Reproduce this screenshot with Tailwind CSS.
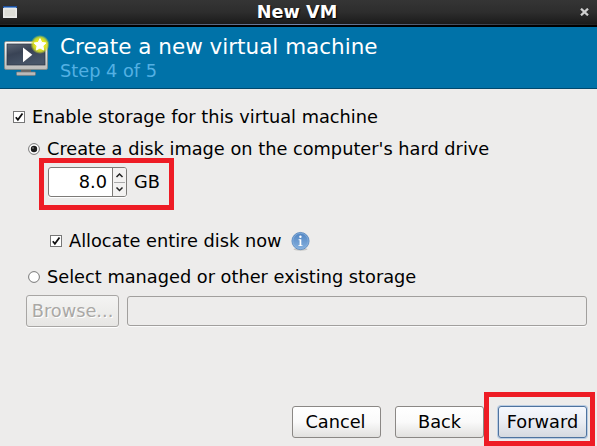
<!DOCTYPE html>
<html lang="en">
<head>
<meta charset="utf-8">
<title>New VM</title>
<script src="https://cdn.jsdelivr.net/npm/@tailwindcss/browser@4"></script>
</head>
<body class="w-[597px] h-[446px] overflow-hidden bg-[#edeceb] font-['DejaVu_Sans',sans-serif] text-[17.75px] leading-5 text-black whitespace-nowrap">
<div class="relative flex h-[446px] w-[597px] flex-col">
  <div class="flex h-[27px] shrink-0 items-start justify-between border-b-2 border-black bg-linear-to-b from-[#353535] via-[#2d2d2d] to-[#191919] pl-[3px] pr-2">
    <svg class="mt-[6px] h-3 w-[14px]" viewBox="0 0 14 12"><path fill="#e4e4e4" d="M0 0h14v12H0z"/><path fill="#1e4f9d" d="M0 0h14v2H0z"/><path fill="#6b9bd8" d="M1 1h12v1H1z"/><path fill="#dcdcd6" stroke="#fff" stroke-width=".5" d="M1 3h12v8H1z"/></svg>
    <div class="mt-[2px] pr-[3px] text-[17.7px] font-bold text-white [text-shadow:1px_1px_1px_#000]">New VM</div>
    <svg class="mt-2 h-2 w-[9px]" viewBox="0 0 9 8"><path d="M1 .7 8 7.3M8 .7 1 7.3" stroke="#d0d0d0" stroke-width="2.3"/></svg>
  </div>
  <div class="absolute left-0 top-6 h-px w-full bg-linear-to-r from-[#222] via-[#7186ae] to-[#222]"></div>
  <header class="flex h-[62px] shrink-0 border-b border-[#00496e] bg-[#0072a8] pl-1">
    <svg class="mt-[7px] h-[44px] w-[46px] shrink-0" viewBox="4 34 46 44">
      <defs>
        <linearGradient id="scr" x2=".5" y2="1"><stop stop-color="#5d6674"/><stop offset=".45" stop-color="#394355"/><stop offset="1" stop-color="#485669"/></linearGradient>
        <linearGradient id="bez" x2="0" y2="1"><stop stop-color="#fafafa"/><stop offset="1" stop-color="#bcbcba"/></linearGradient>
        <radialGradient id="glow"><stop offset=".5" stop-color="#e9ea1c"/><stop offset=".75" stop-color="#d5df27" stop-opacity=".85"/><stop offset="1" stop-color="#c8d830" stop-opacity="0"/></radialGradient>
      </defs>
      <path fill="#666" d="M21 69h10v4H21z"/>
      <rect x="16.5" y="72" width="19" height="3.4" rx=".8" fill="#bbb" stroke="#777" stroke-width=".7"/>
      <rect x="4.5" y="41.5" width="43" height="28" rx="1.5" fill="url(#bez)" stroke="#888a85" stroke-width=".8"/>
      <rect x="7" y="44" width="38" height="21" fill="url(#scr)" stroke="#2c3442" stroke-width=".7"/>
      <path fill="#fff" d="m23 47.5 9.3 7.3-9.3 7.4z"/>
      <circle cx="40" cy="44.5" r="9.6" fill="url(#glow)"/>
      <path fill="#fff" stroke="#fff" stroke-linejoin="round" d="m40 38.6 1.8 3.8 4.1.6-3 2.9.8 4.1-3.7-2-3.7 2 .8-4.1-3-2.9 4.1-.6z"/>
    </svg>
    <div class="ml-[10px] flex flex-col">
      <h1 class="mt-[8px] h-6 text-[21.5px] leading-6 text-white">Create a new virtual machine</h1>
      <p class="mt-[2px] text-[17.75px] leading-5 text-[#53b0e3]">Step 4 of 5</p>
    </div>
  </header>
  <main class="flex flex-col">
    <label class="ml-[13px] mt-[18px] flex h-5 items-center gap-[7px]">
      <svg class="h-3 w-3" viewBox="0 0 12 12"><rect x=".5" y=".5" width="11" height="11" fill="#fff" stroke="#777"/><path d="m2.8 6.2 2.1 2.6L9.5 2.5" fill="none" stroke="#111" stroke-width="1.8"/></svg>
      <span>Enable storage for this virtual machine</span>
    </label>
    <label class="ml-[28px] mt-3 flex h-5 items-center gap-[7px]">
      <svg class="h-3 w-3" viewBox="0 0 12 12"><circle cx="6" cy="6" r="5.4" fill="#fff" stroke="#777"/><circle cx="6" cy="6" r="3.2" fill="#1c1c1c"/><circle cx="5" cy="5" r=".9" fill="#777"/></svg>
      <span>Create a disk image on the computer's hard drive</span>
    </label>
    <div class="-mt-px ml-[39px] flex h-[52px] w-[135px] items-center border-5 border-[#ee1c25] pl-1">
      <div class="mt-[-4px] flex h-[30px] w-[79px] overflow-hidden rounded-[3px] border border-[#7d7b78] bg-white shadow-[0_1px_0_#fff]">
        <div class="w-[64px] border-r border-[#7d7b78] pr-[5px] pt-1 text-right">8.0</div>
        <svg class="h-7 w-[13px]" viewBox="0 0 13 28"><path fill="#f3f2f1" d="M0 0h13v28H0z"/><path d="M1 14.5h11" stroke="#aaa"/><path d="m3.5 9 3-3 3 3M3.5 19.5l3 3 3-3" fill="none" stroke="#222" stroke-width="1.5"/></svg>
      </div>
      <span class="ml-[7px] mt-[-4px]">GB</span>
    </div>
    <label class="ml-[50px] mt-[21px] flex h-5 items-center gap-[7px]">
      <svg class="h-3 w-3" viewBox="0 0 12 12"><rect x=".5" y=".5" width="11" height="11" fill="#fff" stroke="#777"/><path d="m2.8 6.2 2.1 2.6L9.5 2.5" fill="none" stroke="#111" stroke-width="1.8"/></svg>
      <span>Allocate entire disk now</span>
      <svg class="ml-[2px] h-5 w-[19px]" viewBox="0 0 19 20"><defs><linearGradient id="info" x2="0" y2="1"><stop stop-color="#4f83c1"/><stop offset="1" stop-color="#86b1df"/></linearGradient></defs><ellipse cx="9.5" cy="18.2" rx="7" ry="1.5" fill="#c5c5c4"/><circle cx="9.5" cy="10" r="8.6" fill="url(#info)" stroke="#487bb8" stroke-width=".7"/><circle cx="9.5" cy="10" r="7.7" fill="none" stroke="#8db5df" stroke-width=".7"/><circle cx="9.4" cy="5.8" r="1.2" fill="#fff"/><path fill="#fff" d="M7.6 8.3h2.7v5.9h1.2v.9H7.4v-.9h1.2V9.2h-1z"/></svg>
    </label>
    <label class="ml-[28px] mt-4 flex h-5 items-center gap-[7px]">
      <svg class="h-3 w-3" viewBox="0 0 12 12"><circle cx="6" cy="6" r="5.4" fill="#fff" stroke="#777"/></svg>
      <span>Select managed or other existing storage</span>
    </label>
    <div class="ml-[26px] mt-2 flex items-center gap-2">
      <button class="h-8 w-[93px] rounded-[3px] border border-[#a8a6a4] bg-linear-to-b from-[#f4f4f3] to-[#e7e6e4] text-[#aaa8a5] shadow-[0_1px_0_#fff] [text-shadow:1px_1px_0_#fff]">Browse...</button>
      <div class="h-[30px] w-[460px] rounded-[3px] border border-[#a19f9d] shadow-[0_1px_0_#fafafa]"></div>
    </div>
  </main>
  <footer class="mt-[79px] flex gap-[14px] pl-[292px]">
    <button class="h-8 w-[89px] shrink-0 rounded-[3px] border border-[#8b8885] bg-linear-to-b from-white via-[#fafafa] to-[#e2e1df] pr-0.5">Cancel</button>
    <button class="h-8 w-[89px] shrink-0 rounded-[3px] border border-[#8b8885] bg-linear-to-b from-white via-[#fafafa] to-[#e2e1df]">Back</button>
    <button class="h-8 w-[89px] shrink-0 rounded-[3px] border border-[#4e739f] bg-linear-to-b from-[#f5f8fe] via-[#eaedf3] to-[#d5d9e0] shadow-[0_0_0_1px_#b9cce3]">Forward</button>
  </footer>
  <div class="absolute left-[484px] top-[392px] h-[54px] w-[111px] border-5 border-[#ee1c25]"></div>
</div>
</body>
</html>
